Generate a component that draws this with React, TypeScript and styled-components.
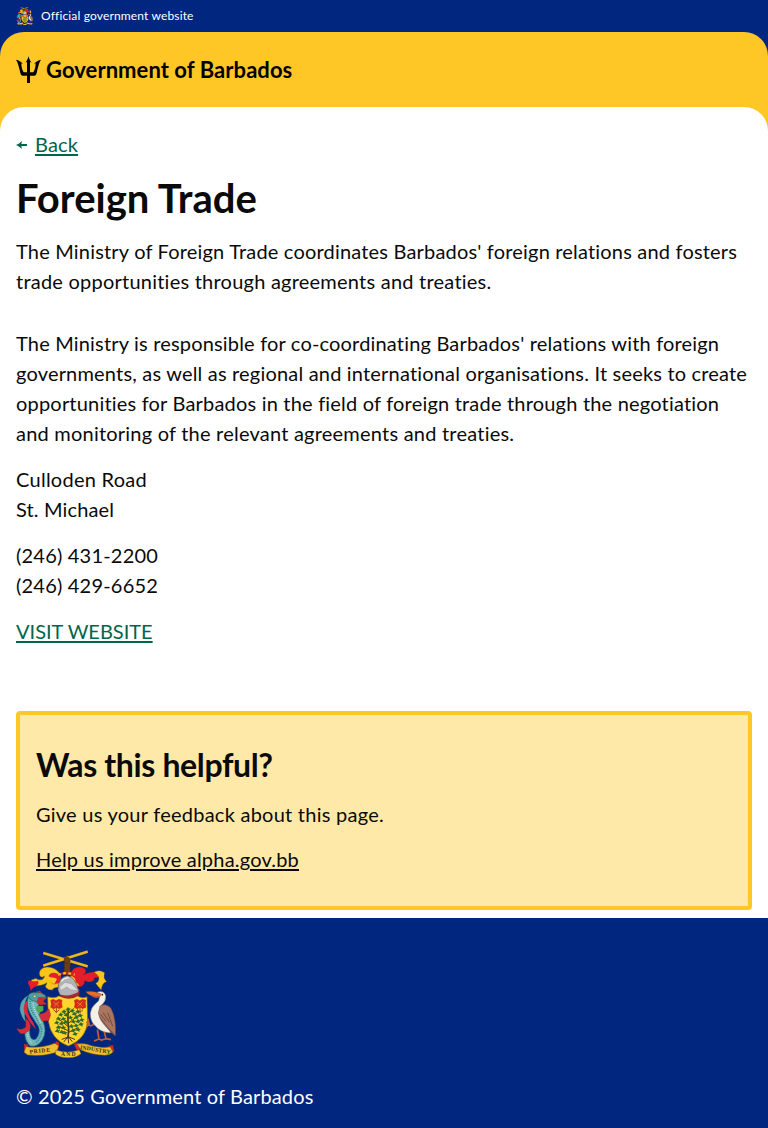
import React from "react";
import styled, { createGlobalStyle } from "styled-components";

const navy = "#00267f";
const yellow = "#ffc726";
const teal = "#00654a";
const ink = "#0a0a0a";

const GlobalStyle = createGlobalStyle`
  *, *::before, *::after { box-sizing: border-box; }
  body {
    margin: 0;
    background: #fff;
    color: ${ink};
    font: 400 20px/30px Lato, "Liberation Sans", sans-serif;
  }
`;

const Page = styled.div`
  display: flex;
  flex-direction: column;
  min-height: 1128px;
`;

const OfficialBar = styled.div`
  display: flex;
  align-items: center;
  gap: 8px;
  height: 32px;
  padding: 0 16px;
  background: ${navy};
  color: #fff;
  font-size: 12px;
  line-height: 18px;
  letter-spacing: 0.15px;
`;

const HeaderBack = styled.div`
  background: ${navy};
`;

const Header = styled.header`
  display: flex;
  align-items: center;
  gap: 5px;
  height: 75px;
  padding: 0 16px;
  background: ${yellow};
  border-radius: 24px 24px 0 0;
  color: #000;
`;

const Brand = styled.span`
  font-size: 22px;
  font-weight: 700;
  line-height: 30px;
  letter-spacing: 0.06px;
`;

const MainBack = styled.div`
  background: linear-gradient(${yellow} 32px, #fff 32px);
`;

const Main = styled.main`
  display: flex;
  flex-direction: column;
  padding: 23px 16px 65px;
  background: #fff;
  border-radius: 24px 24px 0 0;
`;

const BackRow = styled.div`
  display: flex;
  align-items: center;
  gap: 8px;
  height: 30px;
  color: ${teal};
`;

const Link = styled.a<{ $color: string; $track?: number }>`
  color: ${(p) => p.$color};
  letter-spacing: ${(p) => p.$track ?? 0.17}px;
  text-decoration: underline;
  text-decoration-thickness: 2px;
  text-underline-offset: 2px;
`;

const BackLink = styled(Link)`
  margin-bottom: 2px;
`;

const Title = styled.h1`
  margin: 13px 0;
  font-size: 40px;
  font-weight: 700;
  line-height: 50px;
  letter-spacing: 0;
`;

const Paragraph = styled.p<{ $after?: number }>`
  margin: 0 0 ${(p) => p.$after ?? 16}px;
`;

const Line = styled.span<{ $track?: number }>`
  display: block;
  white-space: nowrap;
  letter-spacing: ${(p) => p.$track ?? 0.187}px;
`;

const Feedback = styled.section`
  margin: 0 16px 8px;
  height: 199px;
  padding: 30px 16px;
  background: #ffe9a8;
  border: 4px solid ${yellow};
  border-radius: 4px;
`;

const FeedbackTitle = styled.h2`
  margin: 0 0 14px;
  font-size: 32px;
  font-weight: 700;
  line-height: 40px;
  letter-spacing: -0.36px;
`;

const Footer = styled.footer`
  display: flex;
  flex-direction: column;
  gap: 23px;
  flex: 1;
  padding: 32px 16px 16px;
  background: ${navy};
  color: #fff;
`;

const CrestSvg = styled.svg`
  display: block;
  flex: none;
`;

const Motto = styled.text`
  font: 700 17px "Liberation Serif", serif;
  fill: #3d2c08;
`;

const leaves = [
  [180, 207], [168, 214], [192, 212], [158, 223], [175, 224], [199, 221], [209, 214],
  [151, 235], [166, 236], [187, 232], [205, 231], [217, 226], [146, 247], [160, 250],
  [173, 245], [196, 244], [210, 243], [221, 239], [151, 261], [166, 262], [190, 258],
  [204, 256], [219, 252], [148, 272], [161, 275], [195, 271], [210, 268], [170, 278], [201, 281],
];

function Crest({ width, height, motto }: { width: number; height: number; motto?: boolean }) {
  return (
    <CrestSvg width={width} height={height} viewBox="24 30 300 324" preserveAspectRatio="none" aria-label="Coat of arms">
      {/* raised forearm holding crossed canes */}
      <path d="M169 66l1-15 7-6 9 3 4 14-4 20 2 22h-21l2-20z" fill="#6b3d1c" stroke="#35200f" />
      <path d="M106 39L239 79M106 77L239 35" stroke="#7d6212" strokeWidth="9" />
      <path d="M106 39L239 79M106 77L239 35" stroke="#e8b923" strokeWidth="7" />
      <path d="M168 54q8-6 17 0l2 11-8 6-10-4z" fill="#6b3d1c" stroke="#35200f" />

      {/* mantling */}
      <path d="M158 106C152 92 138 82 118 81C102 82 91 91 95 106C98 113 105 113 109 108C108 122 92 122 84 115L70 120L68 142Q83 138 98 136Q108 134 117 128L112 140Q120 152 133 150Q137 142 151 142L156 122Z" fill="#f9c518" stroke="#6d5510" strokeWidth="1.5" />
      <path d="M62 121Q73 126 90 122Q96 134 79 141Q72 146 68 152Q66 137 60 131Z" fill="#e41e2b" />
      <path d="M157 108C143 94 127 96 122 108C128 116 140 111 147 117L139 133L157 128Z" fill="#e41e2b" />
      <path d="M128 126Q134 136 150 130" fill="none" stroke="#b98a15" strokeWidth="2" />
      <path d="M187 106C190 88 203 78 222 82C236 86 237 99 226 104C243 97 259 93 276 99C284 106 276 114 260 113C259 125 245 130 230 122C230 136 218 144 207 139L216 153L200 146Z" fill="#e41e2b" stroke="#861a23" strokeWidth="1.2" />
      <path d="M258 97Q272 87 290 98Q284 113 296 125Q282 127 280 150Q269 139 263 130Q275 124 272 110Q266 101 258 97Z" fill="#f9c518" stroke="#6d5510" />
      <path d="M187 108Q203 110 203 126Q211 131 214 137Q203 139 198 131Z" fill="#f9c518" />
      <path d="M150 104Q173 95 200 104" fill="none" stroke="#c92521" strokeWidth="7" />
      <path d="M150 104Q173 95 200 104" fill="none" stroke="#f9c518" strokeWidth="7" strokeDasharray="8 8" />

      {/* shield and helmet */}
      <path d="M119 170Q140 176 152 168Q176 174 206 166Q222 178 237 170L239 242Q236 296 181 318Q128 298 121 242Z" fill="#ffd52b" stroke="#8d6410" strokeWidth="2" />
      <path d="M150 150Q149 112 179 107Q203 112 211 150Q215 160 204 168Q178 176 156 164Z" fill="#b4b3b6" stroke="#58545c" strokeWidth="2" />
      <path d="M155 140L171 127L190 131L212 153L190 150L176 141L158 152Z" fill="#dddcde" stroke="#77757a" />
      <path d="M160 124Q170 112 182 114" fill="none" stroke="#eee" strokeWidth="4" />
      <path d="M157 164Q186 172 215 154L214 166Q188 184 158 171Z" fill="#a8282c" />

      {/* pride of Barbados flowers */}
      {[145, 216].map((x) => (
        <g key={x}>
          <path d={`M${x} 200v18m-9-9l9 8 9-8`} fill="none" stroke="#a8431c" strokeWidth="3" />
          <path d={`M${x - 17} 181l8-3 8 4 8-4 10 2-1 10 2 12-10 4-8-4-8 5-9-5 2-10z`} fill="#d8281f" stroke="#8c2417" />
          <path d={`M${x - 9} 186l8 6 9-6m-15 14l7-8 8 8`} fill="none" stroke="#f3a126" strokeWidth="2" />
        </g>
      ))}

      {/* bearded fig tree */}
      <g fill="none" stroke="#493616" strokeLinecap="round">
        <path d="M181 209q-3 30 1 58l-2 27" strokeWidth="5" />
        <path d="M181 272l-30-13m31 18l28-14m-30-4l-30-24m31 15l33-26m-33 8l-19-18m19 7l16-15" strokeWidth="3" />
        <path d="M180 291l-18 7m17-7l-11 14m12-14l2 18m0-18l10 13m-9-13l17 7" strokeWidth="3" />
      </g>
      <g fill="#2f6b2d">
        {leaves.map(([x, y]) => (
          <path key={`${x}-${y}`} d={`M${x - 8} ${y + 3}l5-5 3-4 3 4 6 1-5 4 1 5-5-3z`} />
        ))}
      </g>

      {/* dolphin supporter */}
      <path d="M95 158Q68 154 60 174Q53 194 66 220Q80 243 91 259Q99 279 84 297Q70 303 66 285Q66 271 62 263L50 270Q49 306 67 318Q87 323 103 300Q118 275 106 246L92 212Q86 194 101 184Z" fill="#6fb6b8" stroke="#1c5d70" strokeWidth="2" />
      <path d="M68 176Q62 194 75 219Q91 241 100 266Q103 288 83 309" fill="none" stroke="#2f7f92" strokeWidth="5" strokeDasharray="3 4" />
      <path d="M78 178Q72 196 84 219L99 251M58 275Q59 299 72 309" fill="none" stroke="#b4ded2" strokeWidth="5" strokeDasharray="3 3" />
      <path d="M63 164Q32 182 36 211Q40 233 54 247Q47 226 53 206Q46 188 63 164Z" fill="#5aa5ae" stroke="#1c5d70" />
      <path d="M54 183Q40 206 53 226Q62 244 75 258L84 269Q77 246 66 232Q53 207 60 184Z" fill="#d42d3b" />
      <path d="M92 223L110 218L123 206L128 225L122 242L102 243Z" fill="#d42d3b" stroke="#80232c" />
      <path d="M26 265Q39 272 53 262L54 235Q72 251 66 268Q54 284 38 281Q29 275 26 265Z" fill="#d42d3b" stroke="#80232c" />
      <path d="M60 170Q63 156 83 158Q98 154 112 166L115 175L98 185L73 183Z" fill="#4f9ea0" stroke="#195b68" strokeWidth="2" />
      <path d="M91 171L114 172L106 184L117 193L97 195L85 189ZM82 155L96 152L102 160Z" fill="#c92c33" />
      <path d="M86 197L106 198L106 212L93 219L84 210Z" fill="#49a956" />
      <circle cx="80" cy="169" r="4" fill="#efdc87" stroke="#222" />

      {/* pelican supporter */}
      <path d="M268 269L273 297L258 303M273 297L284 302M286 265L294 296L279 301M294 296L309 299M257 252Q248 262 243 253L240 236M243 252L235 262M246 251L235 246" fill="none" stroke="#c0632f" strokeWidth="5" />
      <path d="M268 156Q288 150 293 167Q295 183 281 195Q274 204 280 219L296 249L308 279Q276 276 262 258Q246 244 247 219Q250 201 264 190Q276 181 274 171Z" fill="#f3f0e7" stroke="#77736c" strokeWidth="1.5" />
      <path d="M276 198Q294 188 309 205Q326 238 322 288Q306 276 290 256Q274 239 271 219Z" fill="#ab7560" stroke="#65483e" strokeWidth="1.5" />
      <path d="M278 223L294 244M285 218L305 247M276 233L304 268L319 282M299 218L314 259" fill="none" stroke="#704d43" strokeWidth="3" />
      <path d="M279 161Q255 150 233 155Q246 172 276 170Z" fill="#e86d29" stroke="#843b24" />
      <path d="M248 166Q259 180 278 170Z" fill="#bb5535" />
      <circle cx="283" cy="164" r="2.5" fill="#17130f" />

      {/* motto ribbon */}
      <path d="M48 311L60 314L58 339L49 333ZM301 318L315 315L319 334L302 340Z" fill="#cf2a2b" stroke="#6d1c18" />
      <path d="M144 303L154 308L151 328L139 321ZM210 307L198 313L207 332L217 326Z" fill="#d62b2b" stroke="#6d1c18" />
      <path d="M54 320Q100 326 140 310L152 317L146 337Q105 350 59 345L48 337Z" fill="#f0be2c" stroke="#7d570c" strokeWidth="1.5" />
      <path d="M144 330Q180 342 214 329L219 341Q204 354 180 353Q153 353 142 342Z" fill="#f5ca34" stroke="#7d570c" strokeWidth="1.5" />
      <path d="M207 312Q229 308 253 318Q282 325 307 321L315 336Q306 346 290 346Q250 344 219 330Z" fill="#f0be2c" stroke="#7d570c" strokeWidth="1.5" />
      {motto && (
        <g>
          <Motto x="64" y="338" textLength="62" transform="rotate(-6 96 331)">PRIDE</Motto>
          <Motto x="159" y="349" textLength="44">AND</Motto>
          <Motto x="216" y="334" textLength="92" transform="rotate(9 260 330)">INDUSTRY</Motto>
        </g>
      )}
    </CrestSvg>
  );
}

function Trident() {
  return (
    <svg width="25" height="27" viewBox="0 0 75 81" fill="#000" aria-hidden="true">
      <path d="M37.5 0C39 8 42 14 47 20L42 18V49H52C57 42 59 30 59 22L54 25C59 17 67 12 75 11C69 19 67 30 64 42C62 54 60 59 56 59H42V81H33V59H19C15 59 13 54 11 42C8 30 6 19 0 11C8 12 16 17 21 25L16 22C16 30 18 42 23 49H33V18L28 20C33 14 36 8 37.5 0Z" />
    </svg>
  );
}

function BackArrow() {
  return (
    <svg width="11" height="8" viewBox="0 0 33 24" fill={teal} aria-hidden="true">
      <path d="M0 12C7 9 12 6 18 0L16 9H33V15H16L18 24C12 18 7 15 0 12Z" />
    </svg>
  );
}

export default function App() {
  return (
    <>
      <GlobalStyle />
      <Page>
        <OfficialBar>
          <Crest width={17} height={18} />
          <span>Official government website</span>
        </OfficialBar>
        <HeaderBack>
          <Header>
            <Trident />
            <Brand>Government of Barbados</Brand>
          </Header>
        </HeaderBack>
        <MainBack>
          <Main>
            <BackRow>
              <BackArrow />
              <BackLink href="#" $color={teal}>Back</BackLink>
            </BackRow>
            <Title>Foreign Trade</Title>
            <Paragraph $after={32}>
              <Line>The Ministry of Foreign Trade coordinates Barbados' foreign relations and fosters</Line>
              <Line $track={0.23}>trade opportunities through agreements and treaties.</Line>
            </Paragraph>
            <Paragraph>
              <Line $track={0.178}>The Ministry is responsible for co-coordinating Barbados' relations with foreign</Line>
              <Line>governments, as well as regional and international organisations. It seeks to create</Line>
              <Line $track={0.195}>opportunities for Barbados in the field of foreign trade through the negotiation</Line>
              <Line $track={0.22}>and monitoring of the relevant agreements and treaties.</Line>
            </Paragraph>
            <Paragraph>
              <Line $track={0.27}>Culloden Road</Line>
              <Line $track={0.14}>St. Michael</Line>
            </Paragraph>
            <Paragraph>
              <Line $track={0.2}>(246) 431-2200</Line>
              <Line $track={0.2}>(246) 429-6652</Line>
            </Paragraph>
            <Paragraph $after={0}>
              <Link href="#" $color={teal} $track={0}>VISIT WEBSITE</Link>
            </Paragraph>
          </Main>
        </MainBack>
        <Feedback>
          <FeedbackTitle>Was this helpful?</FeedbackTitle>
          <Paragraph $after={15}>
            <Line $track={0.25}>Give us your feedback about this page.</Line>
          </Paragraph>
          <Link href="#" $color={ink} $track={0.2}>Help us improve alpha.gov.bb</Link>
        </Feedback>
        <Footer>
          <Crest width={100} height={108} motto />
          <Line $track={0.14}>© 2025 Government of Barbados</Line>
        </Footer>
      </Page>
    </>
  );
}
